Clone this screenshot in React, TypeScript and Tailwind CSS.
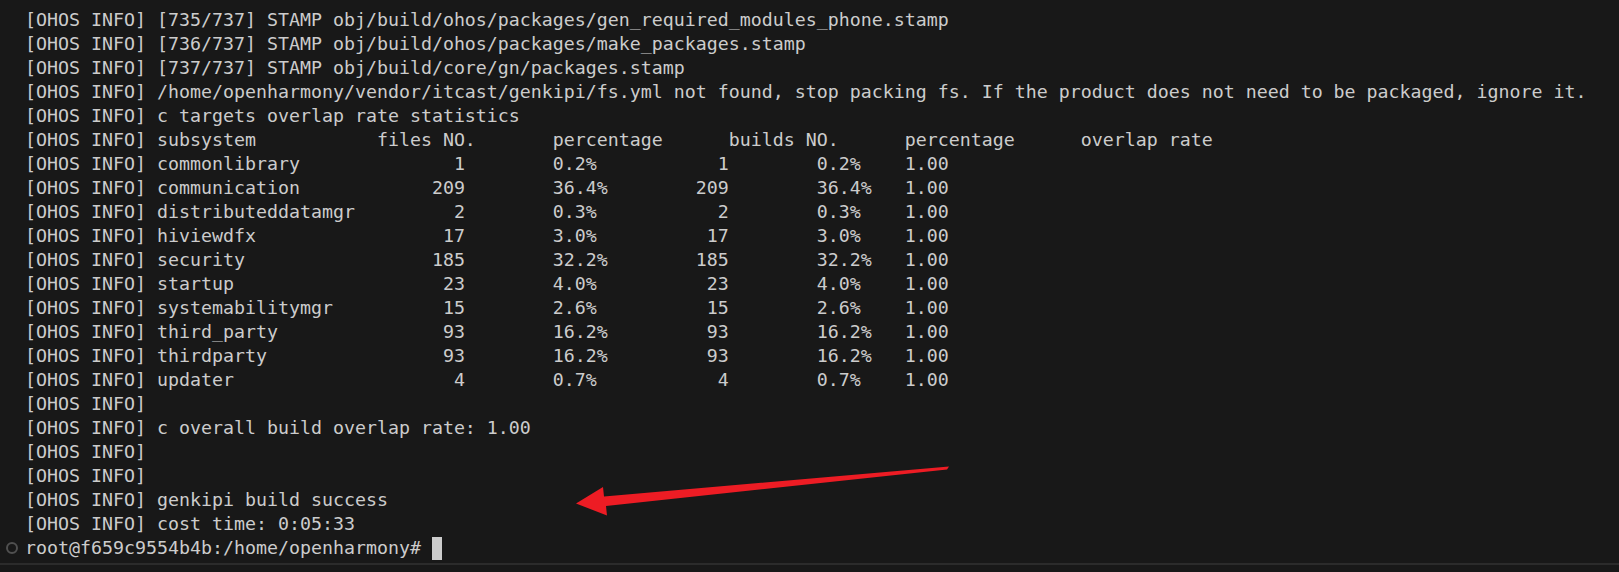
import React from 'react';

const PREFIX = '[OHOS INFO] ';

const stats = [
  { name: 'commonlibrary', files: 1, pct: '0.2%' },
  { name: 'communication', files: 209, pct: '36.4%' },
  { name: 'distributeddatamgr', files: 2, pct: '0.3%' },
  { name: 'hiviewdfx', files: 17, pct: '3.0%' },
  { name: 'security', files: 185, pct: '32.2%' },
  { name: 'startup', files: 23, pct: '4.0%' },
  { name: 'systemabilitymgr', files: 15, pct: '2.6%' },
  { name: 'third_party', files: 93, pct: '16.2%' },
  { name: 'thirdparty', files: 93, pct: '16.2%' },
  { name: 'updater', files: 4, pct: '0.7%' },
];

const header =
  PREFIX +
  'subsystem'.padEnd(20) +
  'files NO.'.padEnd(16) +
  'percentage'.padEnd(16) +
  'builds NO.'.padEnd(16) +
  'percentage'.padEnd(16) +
  'overlap rate';

const statRows = stats.map(
  (s) =>
    PREFIX +
    s.name.padEnd(20) +
    String(s.files).padStart(8) +
    ' '.repeat(8) +
    s.pct.padEnd(8) +
    String(s.files).padStart(8) +
    ' '.repeat(8) +
    s.pct.padEnd(8) +
    '1.00'
);

const lines = [
  PREFIX + '[735/737] STAMP obj/build/ohos/packages/gen_required_modules_phone.stamp',
  PREFIX + '[736/737] STAMP obj/build/ohos/packages/make_packages.stamp',
  PREFIX + '[737/737] STAMP obj/build/core/gn/packages.stamp',
  PREFIX +
    '/home/openharmony/vendor/itcast/genkipi/fs.yml not found, stop packing fs. If the product does not need to be packaged, ignore it.',
  PREFIX + 'c targets overlap rate statistics',
  header,
  ...statRows,
  PREFIX,
  PREFIX + 'c overall build overlap rate: 1.00',
  PREFIX,
  PREFIX,
  PREFIX + 'genkipi build success',
  PREFIX + 'cost time: 0:05:33',
];

const App: React.FC = () => {
  return (
    <div className="relative w-full h-[572px] bg-[#181818] flex flex-col overflow-hidden">
      <div className="h-[563px] pt-[8px] font-['DejaVu_Sans_Mono',monospace] text-[18.27px] leading-[24px] text-[#cccccc]">
        {lines.map((line, i) => (
          <div key={i} className="flex">
            <div className="w-[25px] shrink-0" />
            <span className="whitespace-pre">{line}</span>
          </div>
        ))}
        <div className="flex items-center">
          <div className="w-[25px] shrink-0 flex items-center pl-[6px]">
            <span className="w-[12px] h-[12px] rounded-full border-2 border-[#505050]" />
          </div>
          <span className="whitespace-pre">root@f659c9554b4b:/home/openharmony# </span>
          <span className="w-[10px] h-[23px] bg-[#cccccc]" />
        </div>
      </div>
      <div className="h-[2px] bg-[#2b2b2b]" />
      <div className="flex-1" />

      {/* red annotation arrow */}
      <svg
        className="absolute top-0 left-0 pointer-events-none"
        width="1619"
        height="572"
        viewBox="0 0 1619 572"
      >
        <polygon
          points="949,466.5 947,469.5 606,506 607,515.5 576,503.5 603,487 604,496.5"
          fill="#ed1c24"
        />
      </svg>
    </div>
  );
};

export default App;
